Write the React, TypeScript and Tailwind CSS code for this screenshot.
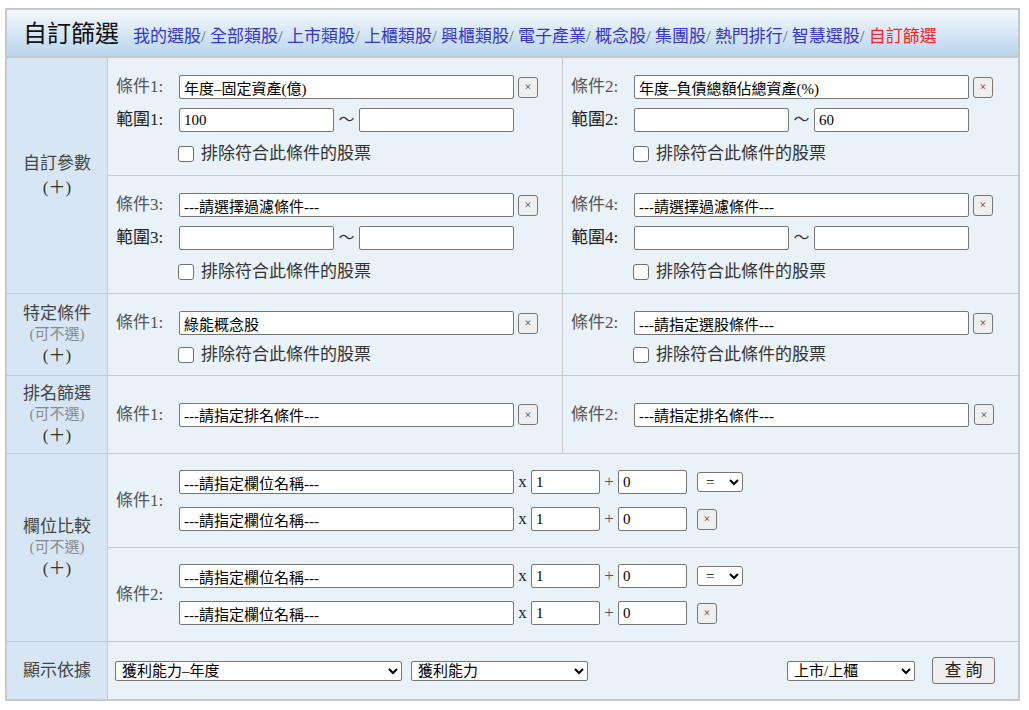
import React from 'react'

const font = "font-['Liberation_Serif','Noto_Sans_CJK_TC',serif]"

const navLinks = ['我的選股', '全部類股', '上市類股', '上櫃類股', '興櫃類股', '電子產業', '概念股', '集團股', '熱門排行', '智慧選股']

function XBtn() {
  return (
    <button className="w-5 h-[21px] shrink-0 bg-[#efefef] border border-[#767676] rounded-[3px] text-[12px] leading-none text-[#444] flex items-center justify-center">
      ×
    </button>
  )
}

function Box({ value = '', w }: { value?: string; w: string }) {
  return (
    <input
      readOnly
      value={value}
      className={`${w} h-6 shrink-0 border border-[#767676] rounded-[2px] bg-white px-1 text-[15px] leading-[20px] text-black outline-none`}
    />
  )
}

function Exclude({ mt }: { mt: string }) {
  return (
    <div className={`flex items-center h-[22px] ml-[62px] ${mt}`}>
      <span className="w-4 h-4 border-[1.5px] border-[#6f6f6f] rounded-[3px] bg-white" />
      <span className="ml-[7px] text-[17px] leading-[22px] text-[#333]">排除符合此條件的股票</span>
    </div>
  )
}

function Cond({ n, value, range, lo = '', hi = '', exclude = true, border }: {
  n: number
  value: string
  range?: boolean
  lo?: string
  hi?: string
  exclude?: boolean
  border?: boolean
}) {
  return (
    <div className={`w-[455px] pl-2 pt-[17px] ${border ? 'border-r border-[#c8c8c8]' : ''}`}>
      <div className="flex items-center h-6">
        <span className="w-[63px] text-[17px] leading-6 text-[#555]">條件{n}:</span>
        <Box w="w-[335px]" value={value} />
        <span className="ml-1"><XBtn /></span>
      </div>
      {range && (
        <div className="flex items-center h-6 mt-[9px]">
          <span className="w-[63px] text-[17px] leading-6 text-[#222]">範圍{n}:</span>
          <Box w="w-[155px]" value={lo} />
          <span className="w-[25px] text-center text-[16px] leading-6 text-[#333]">～</span>
          <Box w="w-[155px]" value={hi} />
        </div>
      )}
      {exclude && <Exclude mt={range ? 'mt-[11px]' : 'mt-[9px]'} />}
    </div>
  )
}

function Side({ title, optional }: { title: string; optional?: boolean }) {
  return (
    <div className="w-[101px] shrink-0 bg-[#d6e6f5] border-r border-[#c8c8c8] flex flex-col items-center justify-center">
      <span className={`text-[17px] text-[#444] ${optional ? 'leading-[21px]' : 'leading-6'}`}>{title}</span>
      {optional && <span className="text-[15px] leading-[21px] text-[#8a8a8a]">(可不選)</span>}
      <span className={`text-[17px] text-[#333] ${optional ? 'leading-[21px]' : 'leading-6'}`}>(＋)</span>
    </div>
  )
}

function CompareLine({ last }: { last?: boolean }) {
  return (
    <div className={`flex items-center h-6 ${last ? 'mt-[13px]' : ''}`}>
      <Box w="w-[335px]" value="---請指定欄位名稱---" />
      <span className="w-[17px] text-center text-[17px] leading-6 text-[#222]">x</span>
      <Box w="w-[69px]" value="1" />
      <span className="w-[18px] text-center text-[17px] leading-6 text-[#555]">+</span>
      <Box w="w-[69px]" value="0" />
      <div className="ml-[10px]">
        {last ? (
          <XBtn />
        ) : (
          <select className="w-[46px] h-5 border border-[#767676] rounded-[3px] bg-white pl-1 text-[15px] leading-none text-black">
            <option>=</option>
          </select>
        )}
      </div>
    </div>
  )
}

function Compare({ n, border }: { n: number; border?: boolean }) {
  return (
    <div className={`flex items-center pl-2 ${border ? 'border-b border-[#c8c8c8] h-[94px]' : 'h-[93px]'}`}>
      <span className="w-[63px] text-[17px] leading-6 text-[#555]">條件{n}:</span>
      <div className="flex flex-col">
        <CompareLine />
        <CompareLine last />
      </div>
    </div>
  )
}

export default function App() {
  return (
    <div className={`${font} pt-2 pl-[5px]`}>
      <div className="w-[1015px] border-2 border-[#c8c8c8] bg-[#e9f1f9]">
        {/* 標題 */}
        <div className="h-[48px] flex items-center pl-[16px] bg-linear-to-b from-[#f4f8fc] to-[#b9d5ed] border-b-2 border-[#c8c8c8]">
          <div className="flex items-baseline pt-[2px]">
            <span className="text-[24px] leading-[30px] text-[#111]">自訂篩選</span>
            <span className="ml-[14px] text-[17px] leading-6">
              {navLinks.map((l) => (
                <span key={l}>
                  <span className="text-[#3535c8]">{l}</span>
                  <span className="text-[#666]">/ </span>
                </span>
              ))}
              <span className="text-[#ff2020]">自訂篩選</span>
            </span>
          </div>
        </div>

        {/* 自訂參數 */}
        <div className="flex border-b border-[#c8c8c8]">
          <Side title="自訂參數" />
          <div className="flex flex-col">
            <div className="flex h-[118px] border-b border-[#c8c8c8]">
              <Cond n={1} value="年度–固定資產(億)" range lo="100" border />
              <Cond n={2} value="年度–負債總額佔總資產(%)" range hi="60" />
            </div>
            <div className="flex h-[117px]">
              <Cond n={3} value="---請選擇過濾條件---" range border />
              <Cond n={4} value="---請選擇過濾條件---" range />
            </div>
          </div>
        </div>

        {/* 特定條件 */}
        <div className="flex h-[82px] border-b border-[#c8c8c8]">
          <Side title="特定條件" optional />
          <Cond n={1} value="綠能概念股" border />
          <Cond n={2} value="---請指定選股條件---" />
        </div>

        {/* 排名篩選 */}
        <div className="flex h-[78px] border-b border-[#c8c8c8]">
          <Side title="排名篩選" optional />
          <div className="w-[455px] pl-2 flex items-center border-r border-[#c8c8c8]">
            <span className="w-[63px] text-[17px] leading-6 text-[#555]">條件1:</span>
            <Box w="w-[335px]" value="---請指定排名條件---" />
            <span className="ml-1"><XBtn /></span>
          </div>
          <div className="w-[455px] pl-2 flex items-center">
            <span className="w-[63px] text-[17px] leading-6 text-[#555]">條件2:</span>
            <Box w="w-[335px]" value="---請指定排名條件---" />
            <span className="ml-[5px]"><XBtn /></span>
          </div>
        </div>

        {/* 欄位比較 */}
        <div className="flex border-b border-[#c8c8c8]">
          <Side title="欄位比較" optional />
          <div className="flex-1 flex flex-col">
            <Compare n={1} border />
            <Compare n={2} />
          </div>
        </div>

        {/* 顯示依據 */}
        <div className="flex h-[57px]">
          <div className="w-[101px] shrink-0 bg-[#d6e6f5] border-r border-[#c8c8c8] flex items-center justify-center">
            <span className="text-[17px] text-[#444]">顯示依據</span>
          </div>
          <div className="flex-1 flex items-center pl-[7px] pr-[23px]">
            <select className="w-[287px] h-5 border border-[#767676] rounded-[2px] bg-white pl-[2px] text-[15px] leading-none text-black">
              <option>獲利能力–年度</option>
            </select>
            <select className="ml-[9px] w-[177px] h-5 border border-[#767676] rounded-[2px] bg-white pl-[2px] text-[15px] leading-none text-black">
              <option>獲利能力</option>
            </select>
            <select className="ml-auto w-[128px] h-5 border border-[#767676] rounded-[2px] bg-white pl-[2px] text-[15px] leading-none text-black">
              <option>上市/上櫃</option>
            </select>
            <button className="ml-[17px] w-[63px] h-[27px] bg-[#efefef] border border-[#767676] rounded-[3px] text-[17px] leading-none text-[#222]">
              查 詢
            </button>
          </div>
        </div>
      </div>
    </div>
  )
}
